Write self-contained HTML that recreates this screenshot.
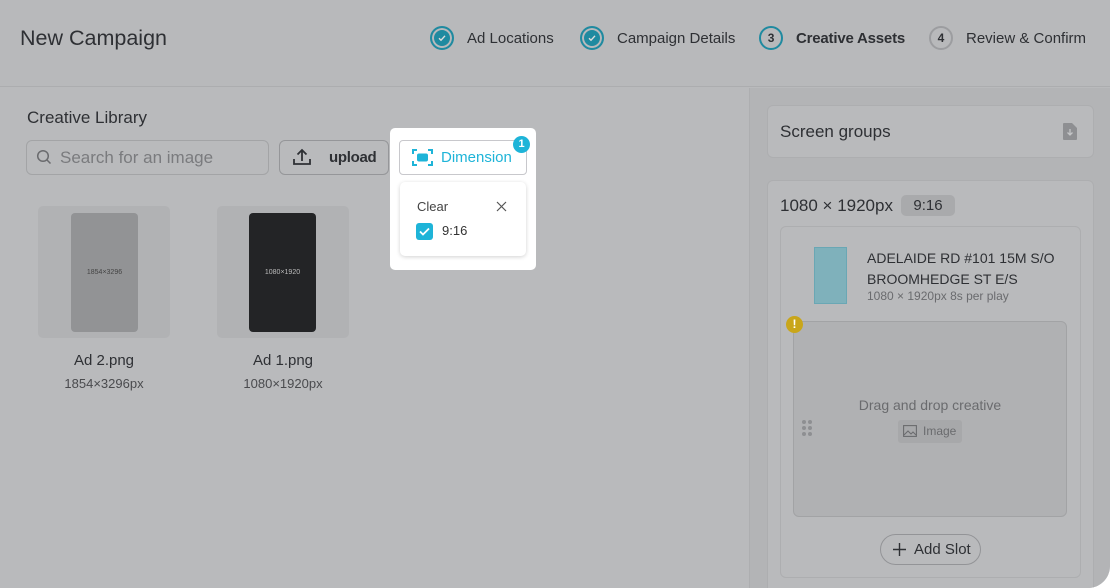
<!DOCTYPE html>
<html><head><style>
*{box-sizing:border-box;margin:0;padding:0}
body{width:1110px;height:588px;background:#fff;font-family:"Liberation Sans",sans-serif;overflow:hidden;position:relative}
.page{position:absolute;left:0;top:0;width:1110px;height:588px;background:#b9babc;border-radius:0 0 22px 0;overflow:hidden}
.hdr{position:absolute;left:0;top:0;width:1110px;height:87px;border-bottom:1px solid #acadaf;background:#b8b9bb}
.title{position:absolute;left:20px;top:26px;font-size:21.5px;color:#2e3034}
.step{position:absolute;top:26px;display:flex;align-items:center;font-size:15px;color:#2e3034}
.circ{width:24px;height:24px;border-radius:50%;border:2px solid #1f8aa0;display:flex;align-items:center;justify-content:center;margin-right:13px;font-size:12px;font-weight:bold}
.done{background:#1f8aa0;box-shadow:inset 0 0 0 2px #b9babc}
.right{position:absolute;left:749px;top:88px;width:361px;height:500px;background:#b3b4b6;border-left:1px solid #adaeb0}
.card{position:absolute;background:#b9babc;border:1px solid #adaeb0;border-radius:6px}
.t{position:absolute;white-space:nowrap}
</style></head><body><div class="page">
<div class="hdr">
<div class="title">New Campaign</div>
<div class="step" style="left:430px"><div class="circ done"><svg width="12" height="12" viewBox="0 0 12 12"><path d="M3 6.2l2 2 4-4.4" stroke="#ddd" stroke-width="1.4" fill="none"/></svg></div>Ad Locations</div>
<div class="step" style="left:580px"><div class="circ done"><svg width="12" height="12" viewBox="0 0 12 12"><path d="M3 6.2l2 2 4-4.4" stroke="#ddd" stroke-width="1.4" fill="none"/></svg></div>Campaign Details</div>
<div class="step" style="left:759px;font-weight:bold;letter-spacing:-0.2px"><div class="circ">3</div>Creative Assets</div>
<div class="step" style="left:929px"><div class="circ" style="border-color:#9c9da0">4</div>Review &amp; Confirm</div>
</div>
<div class="t" style="left:27px;top:108px;font-size:17px;color:#2e3034">Creative Library</div>
<div class="card" style="left:26px;top:140px;width:243px;height:35px;background:#b9babc;border-color:#a3a4a6"></div>
<svg style="position:absolute;left:36px;top:149px" width="16" height="16" viewBox="0 0 16 16"><circle cx="7" cy="7" r="5.3" stroke="#6a6b6e" stroke-width="1.5" fill="none"/><path d="M11 11l3.5 3.5" stroke="#6a6b6e" stroke-width="1.5"/></svg>
<div class="t" style="left:60px;top:148px;font-size:17px;color:#7a7b7e">Search for an image</div>
<div class="card" style="left:279px;top:140px;width:110px;height:35px;border-color:#959699"></div>
<svg style="position:absolute;left:292px;top:148px" width="20" height="18" viewBox="0 0 20 18"><path d="M10 13V2M5.5 6.5L10 2l4.5 4.5M2 11v5h16v-5" stroke="#2e3034" stroke-width="1.8" fill="none"/></svg>
<div class="t" style="left:329px;top:149px;font-size:15px;color:#2e3034;font-weight:bold;letter-spacing:-0.3px">upload</div>
<div style="position:absolute;left:390px;top:128px;width:146px;height:142px;background:#fff;border-radius:5px"></div>
<div style="position:absolute;left:399px;top:140px;width:128px;height:35px;border:1px solid #c8c8cc;border-radius:4px"></div>
<svg style="position:absolute;left:412px;top:149px" width="21" height="17" viewBox="0 0 21 17"><path d="M1 5V1h4M16 1h4v4M20 12v4h-4M5 16H1v-4" stroke="#1eb4d8" stroke-width="2" fill="none"/><rect x="5" y="4.5" width="11" height="8" rx="2" fill="#1eb4d8"/></svg>
<div class="t" style="left:441px;top:149px;font-size:15px;color:#1eb4d8">Dimension</div>
<div style="position:absolute;left:513px;top:136px;width:17px;height:17px;border-radius:50%;background:#1eb4d8;color:#fff;font-size:11px;text-align:center;line-height:17px;font-weight:bold">1</div>
<div style="position:absolute;left:400px;top:182px;width:126px;height:74px;border-radius:5px;box-shadow:0 1px 4px rgba(0,0,0,.18);background:#fff"></div>
<div class="t" style="left:417px;top:199px;font-size:13px;color:#444">Clear</div>
<svg style="position:absolute;left:496px;top:201px" width="11" height="11" viewBox="0 0 11 11"><path d="M1 1l9 9M10 1l-9 9" stroke="#555" stroke-width="1.2"/></svg>
<div style="position:absolute;left:416px;top:223px;width:17px;height:17px;border-radius:3px;background:#1eb4d8"></div>
<svg style="position:absolute;left:416px;top:223px" width="17" height="17" viewBox="0 0 17 17"><path d="M4 8.5l3 3 6-6" stroke="#fff" stroke-width="1.8" fill="none"/></svg>
<div class="t" style="left:442px;top:223px;font-size:13px;color:#333">9:16</div>
<div style="position:absolute;left:38px;top:206px;width:132px;height:132px;background:#b1b2b4;border-radius:5px"></div>
<div style="position:absolute;left:71px;top:213px;width:67px;height:119px;background:#929395;border-radius:4px;font-size:7px;color:#444;text-align:center;line-height:119px">1854×3296</div>
<div style="position:absolute;left:217px;top:206px;width:132px;height:132px;background:#b1b2b4;border-radius:5px"></div>
<div style="position:absolute;left:249px;top:213px;width:67px;height:119px;background:#232426;border-radius:4px;font-size:7px;color:#bbb;text-align:center;line-height:119px">1080×1920</div>
<div class="t" style="left:38px;width:132px;text-align:center;top:352px;font-size:15px;color:#2e3034">Ad 2.png</div>
<div class="t" style="left:38px;width:132px;text-align:center;top:376px;font-size:13px;color:#4a4b4e">1854×3296px</div>
<div class="t" style="left:217px;width:132px;text-align:center;top:352px;font-size:15px;color:#2e3034">Ad 1.png</div>
<div class="t" style="left:217px;width:132px;text-align:center;top:376px;font-size:13px;color:#4a4b4e">1080×1920px</div>
<div class="right"></div>
<div class="card" style="left:767px;top:105px;width:327px;height:53px"></div>
<div class="t" style="left:780px;top:122px;font-size:17px;color:#2e3034">Screen groups</div>
<svg style="position:absolute;left:1062px;top:122px" width="16" height="18" viewBox="0 0 16 18"><path d="M1 2a1 1 0 011-1h8l5 5v11a1 1 0 01-1 1H2a1 1 0 01-1-1z" fill="#8e8f92"/><path d="M8 7v6M5.5 10.5L8 13l2.5-2.5" stroke="#c4c5c7" stroke-width="1.3" fill="none"/></svg>
<div class="card" style="left:767px;top:180px;width:327px;height:420px"></div>
<div class="t" style="left:780px;top:196px;font-size:17px;color:#2e3034">1080 × 1920px</div>
<div style="position:absolute;left:901px;top:195px;width:54px;height:21px;background:#a9aaac;border-radius:5px;font-size:15px;color:#2e3034;text-align:center;line-height:21px">9:16</div>
<div class="card" style="left:780px;top:226px;width:301px;height:352px"></div>
<div style="position:absolute;left:814px;top:247px;width:33px;height:57px;background:#7fb1bb;border:1px solid #6aa7b4"></div>
<div class="t" style="left:867px;top:248px;font-size:14px;color:#2e3034;line-height:21px">ADELAIDE RD #101 15M S/O<br>BROOMHEDGE ST E/S</div>
<div class="t" style="left:867px;top:289px;font-size:12px;color:#6a6b6e">1080 × 1920px 8s per play</div>
<div style="position:absolute;left:793px;top:321px;width:274px;height:196px;background:#b0b1b3;border:1px solid #a2a3a5;border-radius:6px"></div>
<div style="position:absolute;left:786px;top:316px;width:17px;height:17px;border-radius:50%;background:#c9a61a;color:#fff;font-size:12px;font-weight:bold;text-align:center;line-height:17px">!</div>
<div class="t" style="left:793px;width:274px;text-align:center;top:397px;font-size:14px;color:#6a6b6e">Drag and drop creative</div>
<div style="position:absolute;left:898px;top:420px;width:64px;height:23px;background:#a7a8aa;border-radius:3px"></div>
<svg style="position:absolute;left:903px;top:425px" width="14" height="12" viewBox="0 0 14 12"><rect x="0.6" y="0.6" width="12.8" height="10.8" fill="none" stroke="#6a6b6e" stroke-width="1.1"/><path d="M1 10l4-4 3 3 2-2 3 3" stroke="#6a6b6e" fill="none"/></svg>
<div class="t" style="left:923px;top:424px;font-size:12px;color:#6a6b6e">Image</div>
<svg style="position:absolute;left:801px;top:419px" width="12" height="18"><g fill="#8e8f92"><circle cx="3" cy="3" r="2"/><circle cx="9" cy="3" r="2"/><circle cx="3" cy="9" r="2"/><circle cx="9" cy="9" r="2"/><circle cx="3" cy="15" r="2"/><circle cx="9" cy="15" r="2"/></g></svg>
<div style="position:absolute;left:880px;top:534px;width:101px;height:31px;border:1px solid #939497;border-radius:16px"></div>
<svg style="position:absolute;left:892px;top:542px" width="15" height="15"><path d="M7.5 1v13M1 7.5h13" stroke="#2e3034" stroke-width="1.4"/></svg>
<div class="t" style="left:914px;top:541px;font-size:15px;color:#2e3034">Add Slot</div>
</div></body></html>
